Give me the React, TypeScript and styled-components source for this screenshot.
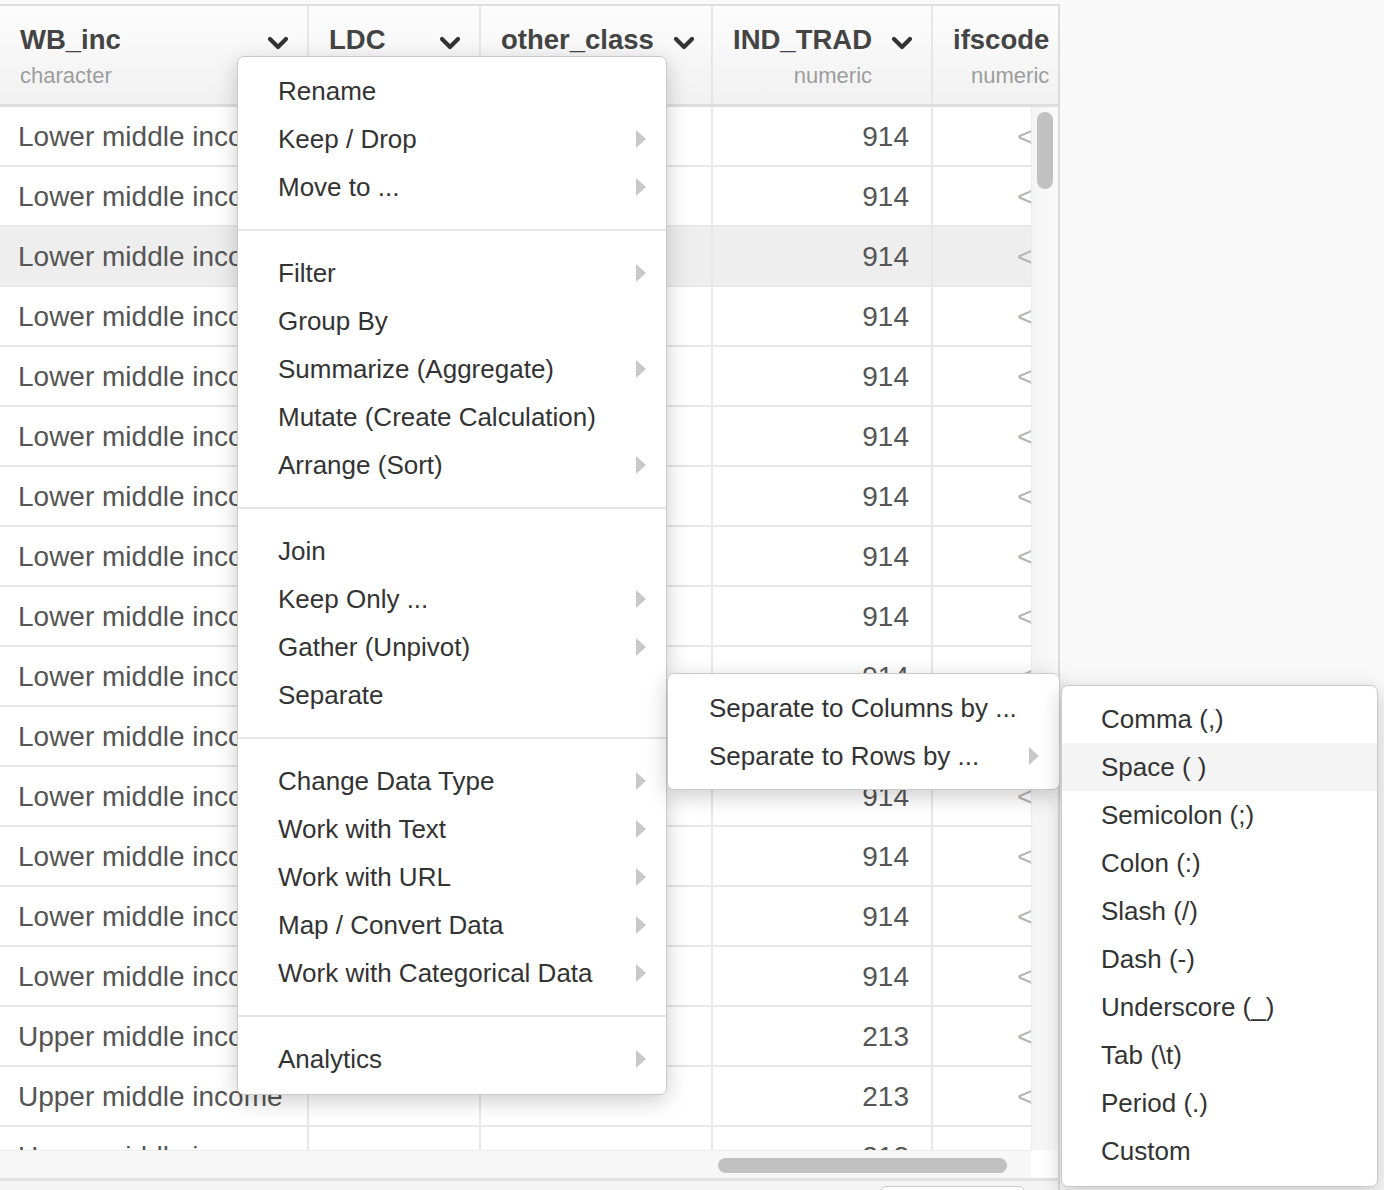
import React from "react";
import styled, { createGlobalStyle } from "styled-components";

const GlobalStyle = createGlobalStyle`
  html, body { margin: 0; padding: 0; background: #f9f9f9; }
  body { font-family: "Liberation Sans", Arial, Helvetica, sans-serif; }
  * { box-sizing: border-box; }
`;

const Page = styled.div`
  position: relative;
  width: 1384px;
  height: 1190px;
  overflow: hidden;
  background: #f9f9f9;
  padding-top: 4px;
`;

const Grid = styled.div`
  width: 1060px;
  border-top: 2px solid #dedede;
  border-right: 2px solid #dcdcdc;
  background: #fff;
  display: flex;
  flex-direction: column;
`;

const HeaderRow = styled.div`
  display: flex;
  height: 101px;
  border-bottom: 3px solid #dedede;
  background: linear-gradient(#fdfdfd, #f1f1f1);
`;

const HeaderCell = styled.div<{ $w: number; $last?: boolean }>`
  width: ${(p) => p.$w}px;
  flex: none;
  display: flex;
  justify-content: space-between;
  align-items: flex-start;
  padding: 17px 18px 0 20px;
  border-right: ${(p) => (p.$last ? "none" : "2px solid #e6e6e6")};
  overflow: hidden;
`;

const TitleBlock = styled.div<{ $numeric?: boolean }>`
  display: flex;
  flex-direction: column;
  align-items: ${(p) => (p.$numeric ? "flex-end" : "flex-start")};
  flex: none;
`;

const ColName = styled.div`
  font-size: 27.5px;
  line-height: 34px;
  font-weight: 700;
  color: #444;
  white-space: nowrap;
`;

const ColType = styled.div`
  font-size: 22px;
  line-height: 28px;
  margin-top: 5px;
  color: #9d9d9d;
  white-space: nowrap;
`;

const ChevronWrap = styled.span`
  flex: none;
  margin-top: 13px;
  margin-left: 19px;
  display: flex;
`;

const Body = styled.div`
  display: flex;
  height: 1043px;
`;

const RowsArea = styled.div`
  width: 1031px;
  flex: none;
  overflow: hidden;
`;

const Row = styled.div<{ $hl?: boolean }>`
  display: flex;
  height: 60px;
  border-bottom: 2px solid #e7e7e7;
  background: ${(p) => (p.$hl ? "#eeeeee" : "#ffffff")};
`;

const Cell = styled.div<{ $w: number; $align?: "left" | "right"; $na?: boolean }>`
  width: ${(p) => p.$w}px;
  flex: none;
  display: flex;
  align-items: center;
  justify-content: ${(p) => (p.$align === "right" ? "flex-end" : "flex-start")};
  padding: ${(p) => (p.$na ? "2px 0 0 84px" : "2px 22px 0 18px")};
  border-right: 2px solid #e8e8e8;
  font-size: 28px;
  color: ${(p) => (p.$na ? "#b4b4b4" : "#555")};
  white-space: nowrap;
  overflow: hidden;
`;

const VScroll = styled.div`
  flex: 1;
  background: linear-gradient(90deg, #f4f4f4, #fafafa);
  border-left: 1px solid #ececec;
  padding-top: 5px;
  display: flex;
  justify-content: center;
  align-items: flex-start;
`;

const VThumb = styled.div`
  width: 16px;
  height: 77px;
  border-radius: 8px;
  background: #c1c1c1;
`;

const HScrollRow = styled.div`
  display: flex;
  height: 28px;
`;

const HTrack = styled.div`
  width: 1031px;
  flex: none;
  background: #f7f7f7;
  border-top: 1px solid #ececec;
  padding: 7px 0 0 718px;
`;

const HThumb = styled.div`
  width: 289px;
  height: 15px;
  border-radius: 8px;
  background: #c1c1c1;
`;

const Corner = styled.div`
  flex: 1;
  background: #fff;
`;

const Footer = styled.div`
  height: 20px;
  border-top: 3px solid #e2e2e2;
  background: #f4f4f4;
  padding: 5px 0 0 880px;
`;

const FooterButton = styled.div`
  width: 145px;
  height: 24px;
  border: 1px solid #c8c8c8;
  border-radius: 6px;
  background: #fff;
`;

const MenuPanel = styled.div<{ $x: number; $y: number; $w: number; $pt: number; $pb: number }>`
  position: absolute;
  left: ${(p) => p.$x}px;
  top: ${(p) => p.$y}px;
  width: ${(p) => p.$w}px;
  padding: ${(p) => p.$pt}px 0 ${(p) => p.$pb}px;
  background: #fff;
  border: 1px solid #c9c9c9;
  border-radius: 7px;
  box-shadow: 0 6px 22px rgba(0, 0, 0, 0.2);
  z-index: 10;
`;

const MenuItem = styled.div<{ $indent: number; $active?: boolean }>`
  height: 48px;
  display: flex;
  align-items: center;
  justify-content: space-between;
  padding: 0 20px 0 ${(p) => p.$indent}px;
  font-size: 26px;
  color: #333;
  white-space: nowrap;
  background: ${(p) => (p.$active ? "#f4f4f4" : "transparent")};
`;

const Arrow = styled.span`
  width: 0;
  height: 0;
  border-top: 9.5px solid transparent;
  border-bottom: 9.5px solid transparent;
  border-left: 10px solid #c8c8c8;
`;

const Divider = styled.div`
  height: 2px;
  margin: 18px 0;
  background: #e6e6e6;
`;

const Chevron = () => (
  <ChevronWrap>
    <svg width="22" height="14" viewBox="0 0 22 14">
      <polyline
        points="3,3 11,11 19,3"
        fill="none"
        stroke="#333"
        strokeWidth="4.2"
        strokeLinecap="round"
        strokeLinejoin="round"
      />
    </svg>
  </ChevronWrap>
);

const columns = [
  { name: "WB_inc", type: "character", w: 309, numeric: false },
  { name: "LDC", type: "", w: 172, numeric: false },
  { name: "other_class", type: "", w: 232, numeric: false },
  { name: "IND_TRAD", type: "numeric", w: 220, numeric: true },
  { name: "ifscode", type: "numeric", w: 125, numeric: true },
];

const rows = [
  ...Array.from({ length: 15 }, () => ({ wb: "Lower middle income", ind: "914" })),
  ...Array.from({ length: 3 }, () => ({ wb: "Upper middle income", ind: "213" })),
];

type Item = { label: string; sub?: boolean } | "sep";

const mainItems: Item[] = [
  { label: "Rename" },
  { label: "Keep / Drop", sub: true },
  { label: "Move to ...", sub: true },
  "sep",
  { label: "Filter", sub: true },
  { label: "Group By" },
  { label: "Summarize (Aggregate)", sub: true },
  { label: "Mutate (Create Calculation)" },
  { label: "Arrange (Sort)", sub: true },
  "sep",
  { label: "Join" },
  { label: "Keep Only ...", sub: true },
  { label: "Gather (Unpivot)", sub: true },
  { label: "Separate" },
  "sep",
  { label: "Change Data Type", sub: true },
  { label: "Work with Text", sub: true },
  { label: "Work with URL", sub: true },
  { label: "Map / Convert Data", sub: true },
  { label: "Work with Categorical Data", sub: true },
  "sep",
  { label: "Analytics", sub: true },
];

const separators = [
  "Comma (,)",
  "Space ( )",
  "Semicolon (;)",
  "Colon (:)",
  "Slash (/)",
  "Dash (-)",
  "Underscore (_)",
  "Tab (\\t)",
  "Period (.)",
  "Custom",
];

export default function App() {
  return (
    <>
      <GlobalStyle />
      <Page>
        <Grid>
          <HeaderRow>
            {columns.map((c, i) => (
              <HeaderCell key={c.name} $w={c.w} $last={i === columns.length - 1}>
                <TitleBlock $numeric={c.numeric}>
                  <ColName>{c.name}</ColName>
                  {c.type && <ColType>{c.type}</ColType>}
                </TitleBlock>
                <Chevron />
              </HeaderCell>
            ))}
          </HeaderRow>
          <Body>
            <RowsArea>
              {rows.map((r, i) => (
                <Row key={i} $hl={i === 2}>
                  <Cell $w={309}>{r.wb}</Cell>
                  <Cell $w={172} />
                  <Cell $w={232} />
                  <Cell $w={220} $align="right">
                    {r.ind}
                  </Cell>
                  <Cell $w={125} $na>
                    {"<NA>"}
                  </Cell>
                </Row>
              ))}
            </RowsArea>
            <VScroll>
              <VThumb />
            </VScroll>
          </Body>
          <HScrollRow>
            <HTrack>
              <HThumb />
            </HTrack>
            <Corner />
          </HScrollRow>
          <Footer>
            <FooterButton />
          </Footer>
        </Grid>

        <MenuPanel $x={237} $y={56} $w={430} $pt={10} $pb={11}>
          {mainItems.map((it, i) =>
            it === "sep" ? (
              <Divider key={i} />
            ) : (
              <MenuItem key={i} $indent={40}>
                <span>{it.label}</span>
                {it.sub && <Arrow />}
              </MenuItem>
            )
          )}
        </MenuPanel>

        <MenuPanel $x={667} $y={673} $w={393} $pt={10} $pb={9}>
          <MenuItem $indent={41}>
            <span>Separate to Columns by ...</span>
          </MenuItem>
          <MenuItem $indent={41}>
            <span>Separate to Rows by ...</span>
            <Arrow />
          </MenuItem>
        </MenuPanel>

        <MenuPanel $x={1061} $y={685} $w={317} $pt={9} $pb={11}>
          {separators.map((s) => (
            <MenuItem key={s} $indent={39} $active={s === "Space ( )"}>
              <span>{s}</span>
            </MenuItem>
          ))}
        </MenuPanel>
      </Page>
    </>
  );
}
